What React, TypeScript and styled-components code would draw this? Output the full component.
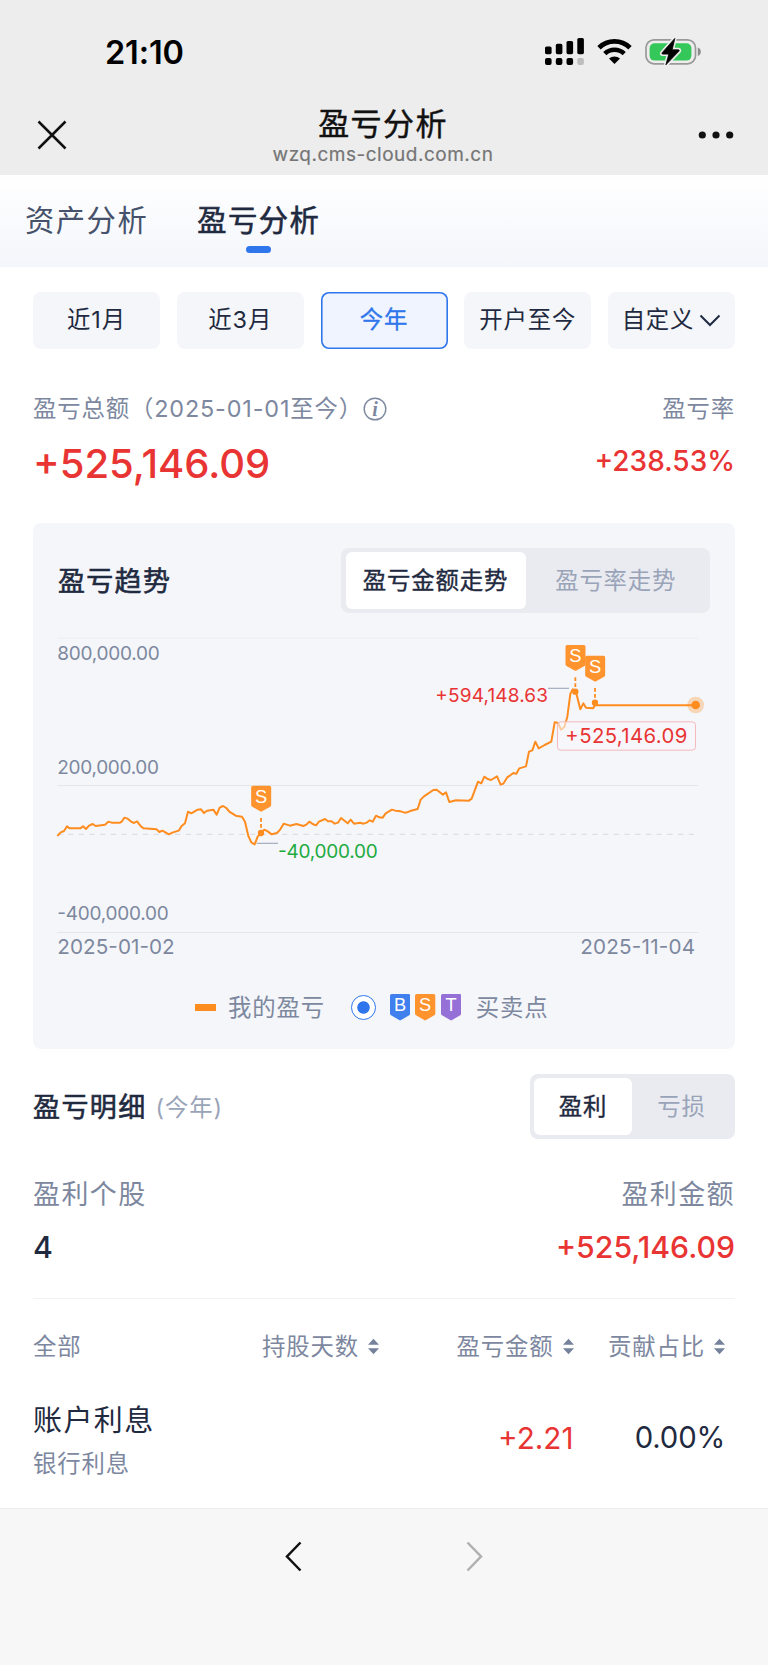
import React from 'react';
import styled, { createGlobalStyle } from 'styled-components';

const ink = '#1f2a40';
const muted = '#7d889f';
const faint = '#9aa4b9';
const red = '#e93434';
const blue = '#2f76ec';
const orange = '#ff8c1f';

const GlobalStyle = createGlobalStyle`
  * { box-sizing: border-box; }
  body {
    margin: 0;
    background: #fff;
    color: ${ink};
    font-family: Inter, 'Noto Sans CJK SC', sans-serif;
    -webkit-font-smoothing: antialiased;
  }
  svg { display: block; flex: none; }
  button { font: inherit; color: inherit; border: 0; padding: 0; background: none; }
`;

/* size, line height, tracking, weight and a faux-medium outline */
const Text = styled.span<{
  $size: number; $line: number; $track?: number; $weight?: number; $color?: string; $bold?: number;
}>`
  display: block;
  white-space: nowrap;
  font-size: ${p => p.$size}px;
  line-height: ${p => p.$line}px;
  letter-spacing: ${p => p.$track ?? 0}px;
  font-weight: ${p => p.$weight ?? 400};
  color: ${p => p.$color ?? ink};
  -webkit-text-stroke: ${p => p.$bold ?? 0}px currentColor;
`;

const Page = styled.div`
  width: 768px;
  height: 1665px;
  display: flex;
  flex-direction: column;
  overflow: hidden;
`;

const TopChrome = styled.header`
  height: 174.5px;
  flex: none;
  background: #ededed;
`;

const StatusBar = styled.div`
  height: 104px;
  padding: 0 66px 0 105px;
  display: flex;
  justify-content: space-between;
`;

const StatusIcons = styled.div`
  display: flex;
  padding-top: 36px;
`;

const NavBar = styled.div`
  display: flex;
  justify-content: space-between;
  padding: 0 34px;
`;

const NavTitle = styled.div`
  display: flex;
  flex-direction: column;
  align-items: center;
  padding-right: 2px;
`;

const NavIcon = styled.button<{ $end?: boolean }>`
  width: 39px;
  height: 62px;
  padding-left: ${p => (p.$end ? 0 : 3)}px;
  display: flex;
  align-items: center;
  justify-content: ${p => (p.$end ? 'flex-end' : 'flex-start')};
`;

const TabBar = styled.nav`
  height: 92px;
  flex: none;
  display: flex;
  gap: 49px;
  padding: 26.5px 25px 0;
  background: linear-gradient(#fff, #f4f6fb);
`;

const Tab = styled.div`
  display: flex;
  flex-direction: column;
  align-items: center;
`;

const TabMark = styled.i`
  width: 25px;
  height: 7px;
  border-radius: 3.5px;
  margin: 4.5px 1px 0 0;
  background: ${blue};
`;

const Content = styled.main`
  flex: 1;
  padding: 25px 33px 0;
`;

const Filters = styled.div`
  display: grid;
  grid-template-columns: repeat(5, 127px);
  justify-content: space-between;
`;

const FilterButton = styled.button<{ $active?: boolean }>`
  height: 57px;
  border-radius: 8px;
  display: flex;
  align-items: center;
  justify-content: center;
  gap: 5px;
  background: ${p => (p.$active ? '#eff4fe' : '#f4f6fa')};
  box-shadow: ${p => (p.$active ? `inset 0 0 0 1.6px ${blue}` : 'none')};
`;

const Split = styled.div<{ $top?: number }>`
  display: flex;
  justify-content: space-between;
  align-items: flex-start;
  margin-top: ${p => p.$top ?? 0}px;
`;

const Inline = styled.div<{ $gap: number }>`
  display: flex;
  align-items: center;
  gap: ${p => p.$gap}px;
`;

const Card = styled.section`
  height: 526px;
  margin-top: 33px;
  padding-top: 25px;
  border-radius: 8px;
  background: #f4f6fa;
`;

const CardHead = styled.div`
  display: flex;
  justify-content: space-between;
  align-items: center;
  padding: 0 25px;
`;

const CardTitle = styled.div`
  padding-top: 4px;
`;

const Segmented = styled.div`
  display: flex;
  height: 65px;
  padding: 4px 4px 4px 4.5px;
  border-radius: 8px;
  background: #e9ebf0;
`;

const Segment = styled.button<{ $active?: boolean; $width: number }>`
  width: ${p => p.$width}px;
  padding-top: 2px;
  display: flex;
  align-items: center;
  justify-content: center;
  border-radius: 6px;
  background: ${p => (p.$active ? '#fff' : 'transparent')};
`;

const ChartBox = styled.div`
  height: 332px;
  margin-top: 15px;
`;

const Legend = styled.div`
  display: flex;
  align-items: center;
  height: 96px;
  padding-left: 162px;
`;

const LegendBar = styled.i`
  width: 21px;
  height: 6.5px;
  margin-right: 12px;
  background: ${orange};
`;

const Radio = styled.i`
  width: 25px;
  height: 25px;
  margin: 0 14px 0 26px;
  border: 1px solid ${blue};
  border-radius: 50%;
  background: radial-gradient(circle, ${blue} 5.8px, #fff 6.6px);
`;

const Badges = styled.div`
  display: flex;
  gap: 5px;
  margin-right: 15px;
`;

const Rule = styled.hr`
  height: 1px;
  border: 0;
  margin: 30px 0 0;
  background: #f1f2f5;
`;

const TableRow = styled.div<{ $top: number }>`
  display: grid;
  grid-template-columns: 190px 156px 194.5px 151.5px;
  align-items: center;
  margin-top: ${p => p.$top}px;
`;

const Cell = styled.div<{ $lift?: number }>`
  display: flex;
  justify-content: flex-end;
  align-items: center;
  gap: 9px;
  padding-bottom: ${p => p.$lift ?? 0}px;
`;

const StockName = styled.div`
  display: flex;
  flex-direction: column;
  gap: 5px;
`;

const BottomBar = styled.footer`
  height: 157px;
  flex: none;
  display: flex;
  justify-content: center;
  gap: 164px;
  padding-top: 32px;
  border-top: 1px solid #ececec;
  background: #f7f7f7;
`;

const Cjk = ({ children, color, bold }: { children: React.ReactNode; color?: string; bold?: number }) => (
  <Text $size={23.4} $line={34} $track={0.85} $color={color} $bold={bold}>{children}</Text>
);

const Signal = () => (
  <svg width="40" height="30" viewBox="0 0 40 30">
    <rect x="0" y="10.5" width="6.6" height="7.7" rx="1.6" />
    <rect x="10.8" y="7.8" width="6.6" height="10.4" rx="1.6" />
    <rect x="21.5" y="5" width="6.6" height="13.2" rx="1.6" />
    <rect x="32.3" y="2" width="6.6" height="16.2" rx="1.6" />
    <rect x="0" y="22" width="6.6" height="7" rx="2" />
    <rect x="10.8" y="22" width="6.6" height="7" rx="2" />
    <rect x="21.5" y="22" width="6.6" height="7" rx="2" />
    <rect x="32.3" y="22" width="6.6" height="7" rx="2" fill="#bdbdbd" />
  </svg>
);

const WifiIcon = styled.svg`
  margin-left: 12px;
`;

const BatteryIcon = styled.svg`
  margin-left: 13px;
`;

const Wifi = () => (
  <WifiIcon width="35" height="30" viewBox="0 0 35 30">
    <path d="M2 11.7A22.3 22.3 0 0 1 33 11.7" fill="none" stroke="#000" strokeWidth="4.8" />
    <path d="M7.8 17.7A14 14 0 0 1 27.2 17.7" fill="none" stroke="#000" strokeWidth="4.6" />
    <path d="M17.5 28L12 22.6A8 8 0 0 1 23 22.6Z" />
  </WifiIcon>
);

const Battery = () => (
  <BatteryIcon width="57" height="32" viewBox="0 0 57 32">
    <rect x="1" y="3.8" width="49.5" height="24" rx="8" fill="none" stroke="#999" strokeWidth="1.7" />
    <path d="M52.8 11.5c2.2.7 3 2.3 3 4.2s-.8 3.5-3 4.2z" fill="#8a8a8a" />
    <rect x="4.6" y="7.2" width="41.8" height="17.4" rx="5" fill="#34c759" />
    <path
      d="M29.8 2.4L17.1 16.8q-.7 1.2.7 1.3h6l-2.9 10.7L34 15.1q.8-1.2-.7-1.3h-6.1z"
      stroke="#ededed" strokeWidth="4" strokeLinejoin="round"
    />
    <path d="M29.8 2.4L17.1 16.8q-.7 1.2.7 1.3h6l-2.9 10.7L34 15.1q.8-1.2-.7-1.3h-6.1z" stroke="#000" strokeWidth=".8" strokeLinejoin="round" />
  </BatteryIcon>
);

const SortArrows = () => (
  <svg width="11" height="17" viewBox="0 0 11 17">
    <path d="M5.5 .8L11 6.8H0zM5.5 16.2L11 10.2H0z" fill="#76829c" />
  </svg>
);

/* flag outline drawn on a 60 x 78 grid */
const FLAG = 'M5 0H55Q60 0 60 5V58Q60 61 57 63L34 76Q30 79 26 76L3 63Q0 61 0 58V5Q0 0 5 0Z';

const Flag = ({ letter, color }: { letter: string; color: string }) => (
  <svg width="20.3" height="26.4" viewBox="0 0 60 78">
    <path d={FLAG} fill={color} />
    <text x="30" y="51" textAnchor="middle" fontFamily="Liberation Sans, sans-serif" fontSize="54" fill="#fff">{letter}</text>
  </svg>
);

/* chart space: 3 units per pixel */
const PROFIT: [number, number][] = [
  [82, 948], [92, 937], [102, 933], [111, 919], [119, 925], [151, 925], [159, 919], [168, 927], [177, 917],
  [188, 912], [197, 918], [225, 914], [235, 905], [245, 908], [270, 908], [276, 904], [283, 893], [293, 896],
  [302, 904], [312, 909], [321, 904], [331, 917], [340, 925], [380, 928], [388, 936], [397, 932], [417, 943],
  [427, 938], [446, 932], [455, 918], [465, 910], [474, 875], [484, 880], [503, 869], [513, 868], [522, 879],
  [531, 872], [550, 869], [560, 884], [569, 863], [579, 858], [589, 864], [598, 875], [617, 887], [636, 890],
  [645, 905], [655, 948], [664, 967], [674, 973], [683, 950], [693, 939], [703, 929], [713, 934], [725, 943],
  [741, 939], [751, 928], [761, 911], [780, 917], [799, 912], [820, 918], [829, 914], [838, 905], [848, 912],
  [858, 916], [867, 905], [885, 897], [894, 904], [905, 904], [914, 911], [924, 908], [933, 894], [953, 910],
  [962, 899], [972, 911], [990, 908], [1001, 911], [1010, 908], [1019, 901], [1028, 905], [1038, 887],
  [1048, 892], [1058, 893], [1067, 880], [1086, 869], [1096, 872], [1112, 874], [1124, 878], [1132, 877],
  [1143, 872], [1163, 867], [1172, 839], [1182, 829], [1210, 810], [1220, 809], [1239, 824], [1248, 817],
  [1258, 846], [1278, 841], [1317, 842], [1325, 836], [1344, 785], [1354, 790], [1363, 770], [1373, 777],
  [1383, 780], [1401, 769], [1412, 794], [1420, 791], [1431, 773], [1450, 759], [1459, 761], [1468, 745],
  [1488, 739], [1497, 695], [1507, 691], [1516, 665], [1526, 685], [1544, 675], [1564, 665], [1574, 607],
  [1584, 609], [1593, 629], [1603, 621], [1612, 590], [1621, 522], [1628, 508], [1637, 512], [1651, 568],
  [1660, 550], [1668, 563], [1689, 565], [1695, 556], [1997, 556],
];

const TradeMark = ({ x, top, dot }: { x: number; top: number; dot: number }) => (
  <g>
    <line x1={x} x2={x} y1={top + 97} y2={dot} stroke={orange} strokeWidth="5.5" strokeDasharray="11 7" />
    <circle cx={x} cy={dot} r="9.5" fill={orange} />
    <path d={FLAG} transform={`translate(${x - 29.5} ${top})`} fill="#ff932e" />
    <text x={x} y={top + 52} textAnchor="middle" fontFamily="Liberation Sans, sans-serif" fontSize="55" fill="#fff">S</text>
  </g>
);

const TrendChart = () => (
  <svg width="702" height="332" viewBox="9 324 2106 996">
    <g stroke="#e3e6eb" strokeWidth="3">
      <line x1="82" x2="2004" y1="354.5" y2="354.5" stroke="#ebedf1" />
      <line x1="82" x2="2004" y1="796.5" y2="796.5" />
      <line x1="82" x2="2004" y1="943" y2="943" stroke="#dcdfe5" strokeWidth="3.6" strokeDasharray="16 16.1" />
      <line x1="82" x2="2004" y1="1237.5" y2="1237.5" />
    </g>
    <g fontSize="57" fill={muted}>
      <text x="82" y="419" textLength="307">800,000.00</text>
      <text x="82" y="762" textLength="305">200,000.00</text>
      <text x="82" y="1200" textLength="334">-400,000.00</text>
    </g>
    <g fontSize="62" fill={muted}>
      <text x="82" y="1302" textLength="352">2025-01-02</text>
      <text x="1651" y="1302" textLength="344">2025-11-04</text>
    </g>
    <polyline points={PROFIT.map(p => p.join(',')).join(' ')} fill="none" stroke={orange} strokeWidth="6" strokeLinejoin="round" />
    <line x1="680" x2="744" y1="970" y2="970" stroke="#a3acbd" strokeWidth="3.6" />
    <text x="744" y="1013" fontSize="57" textLength="299" fill="#22ab3f">-40,000.00</text>
    <line x1="1554" x2="1617" y1="505" y2="505" stroke="#a3acbd" strokeWidth="3.6" />
    <text x="1216" y="547" fontSize="57" textLength="338" fill={red}>+594,148.63</text>
    <TradeMark x={693} top={797} dot={939} />
    <TradeMark x={1636} top={375} dot={515} />
    <TradeMark x={1695} top={407} dot={548} />
    <circle cx="1997" cy="555" r="25" fill={orange} fillOpacity=".3" />
    <circle cx="1997" cy="555" r="13" fill={orange} />
    <rect x="1582.5" y="605.5" width="414" height="85" rx="10" fill="#f8f9fc" fillOpacity=".6" stroke="#f3b9bd" strokeWidth="3" />
    <text x="1606" y="669" fontSize="61" textLength="366" fill={red}>+525,146.09</text>
  </svg>
);

export default function App() {
  return (
    <Page>
      <GlobalStyle />
      <TopChrome>
        <StatusBar>
          <Text $size={32.5} $line={106} $weight={600} $color="#000" $track={-0.15}>21:10</Text>
          <StatusIcons><Signal /><Wifi /><Battery /></StatusIcons>
        </StatusBar>
        <NavBar>
          <NavIcon aria-label="关闭">
            <svg width="30" height="30" viewBox="0 0 30 30">
              <path d="M1.5 1.5L28.5 28.5M28.5 1.5L1.5 28.5" stroke="#111" strokeWidth="2.5" />
            </svg>
          </NavIcon>
          <NavTitle>
            <Text $size={31} $line={40} $track={1.4} $color="#111" $bold={0.45}>盈亏分析</Text>
            <Text $size={19} $line={22} $track={0.5} $color="#757575" $bold={0.2}>wzq.cms-cloud.com.cn</Text>
          </NavTitle>
          <NavIcon aria-label="更多" $end>
            <svg width="36" height="8" viewBox="0 0 36 8" fill="#111">
              <circle cx="4.3" cy="4" r="3.6" />
              <circle cx="18" cy="4" r="3.6" />
              <circle cx="31.7" cy="4" r="3.6" />
            </svg>
          </NavIcon>
        </NavBar>
      </TopChrome>

      <TabBar>
        <Tab><Text $size={29.3} $line={40} $track={1.5} $color="#46526b">资产分析</Text></Tab>
        <Tab>
          <Text $size={29.3} $line={40} $track={1.5} $bold={0.6}>盈亏分析</Text>
          <TabMark />
        </Tab>
      </TabBar>

      <Content>
        <Filters>
          <FilterButton><Cjk>近1月</Cjk></FilterButton>
          <FilterButton><Cjk>近3月</Cjk></FilterButton>
          <FilterButton $active><Cjk color={blue} bold={0.3}>今年</Cjk></FilterButton>
          <FilterButton><Cjk>开户至今</Cjk></FilterButton>
          <FilterButton>
            <Cjk>自定义</Cjk>
            <svg width="22" height="13" viewBox="0 0 22 13">
              <path d="M1.5 1.5L11 11L20.5 1.5" fill="none" stroke={ink} strokeWidth="2" />
            </svg>
          </FilterButton>
        </Filters>

        <Split $top={43}>
          <Inline $gap={0}>
            <Cjk color={muted}>盈亏总额（2025-01-01至今）</Cjk>
            <svg width="24" height="24" viewBox="0 0 24 24">
              <circle cx="12" cy="12" r="10.8" fill="none" stroke={muted} strokeWidth="1.4" />
              <text x="12" y="18.5" textAnchor="middle" fontFamily="Liberation Serif, serif" fontStyle="italic" fontWeight="700" fontSize="20" fill={muted}>i</text>
            </svg>
          </Inline>
          <Cjk color={muted}>盈亏率</Cjk>
        </Split>
        <Split $top={12}>
          <Text $size={40} $line={52} $weight={500} $color={red}>+525,146.09</Text>
          <Text $size={28} $line={46} $weight={500} $color={red}>+238.53%</Text>
        </Split>

        <Card>
          <CardHead>
            <CardTitle><Text $size={27} $line={38} $track={1.3} $bold={0.6}>盈亏趋势</Text></CardTitle>
            <Segmented>
              <Segment $active $width={180}><Cjk bold={0.4}>盈亏金额走势</Cjk></Segment>
              <Segment $width={180.5}><Cjk color={faint}>盈亏率走势</Cjk></Segment>
            </Segmented>
          </CardHead>
          <ChartBox><TrendChart /></ChartBox>
          <Legend>
            <LegendBar />
            <Cjk color={muted}>我的盈亏</Cjk>
            <Radio />
            <Badges>
              <Flag letter="B" color="#3f80ee" />
              <Flag letter="S" color="#ff932e" />
              <Flag letter="T" color="#9570d6" />
            </Badges>
            <Cjk color={muted}>买卖点</Cjk>
          </Legend>
        </Card>

        <Split $top={25}>
          <Inline $gap={9}>
            <Text $size={27} $line={68} $track={1.4} $bold={0.6}>盈亏明细</Text>
            <Cjk color={faint}>(今年)</Cjk>
          </Inline>
          <Segmented>
            <Segment $active $width={98}><Cjk bold={0.4}>盈利</Cjk></Segment>
            <Segment $width={99}><Cjk color={faint}>亏损</Cjk></Segment>
          </Segmented>
        </Split>

        <Split $top={33}>
          <Text $size={27} $line={40} $track={1.4} $color={muted}>盈利个股</Text>
          <Text $size={27} $line={40} $track={1.4} $color={muted}>盈利金额</Text>
        </Split>
        <Split $top={11}>
          <Text $size={30.2} $line={42} $weight={500}>4</Text>
          <Text $size={30.2} $line={42} $weight={500} $color={red}>+525,146.09</Text>
        </Split>
        <Rule />

        <TableRow $top={31}>
          <Cjk color={muted}>全部</Cjk>
          <Cell><Cjk color={muted}>持股天数</Cjk><SortArrows /></Cell>
          <Cell><Cjk color={muted}>盈亏金额</Cjk><SortArrows /></Cell>
          <Cell><Cjk color={muted}>贡献占比</Cjk><SortArrows /></Cell>
        </TableRow>
        <TableRow $top={36}>
          <StockName>
            <Text $size={29} $line={42} $track={1.4}>账户利息</Text>
            <Cjk color={muted}>银行利息</Cjk>
          </StockName>
          <Cell />
          <Cell $lift={5}><Text $size={29.7} $line={42} $color={red}>+2.21</Text></Cell>
          <Cell $lift={5}><Text $size={29.3} $line={42} $track={-0.2}>0.00%</Text></Cell>
        </TableRow>
      </Content>

      <BottomBar>
        <svg width="17" height="31" viewBox="0 0 17 31">
          <path d="M15.5 1.5L2 15.5L15.5 29.5" fill="none" stroke="#111" strokeWidth="2.5" />
        </svg>
        <svg width="17" height="31" viewBox="0 0 17 31">
          <path d="M1.5 1.5L15 15.5L1.5 29.5" fill="none" stroke="#b0b0b0" strokeWidth="2.5" />
        </svg>
      </BottomBar>
    </Page>
  );
}
